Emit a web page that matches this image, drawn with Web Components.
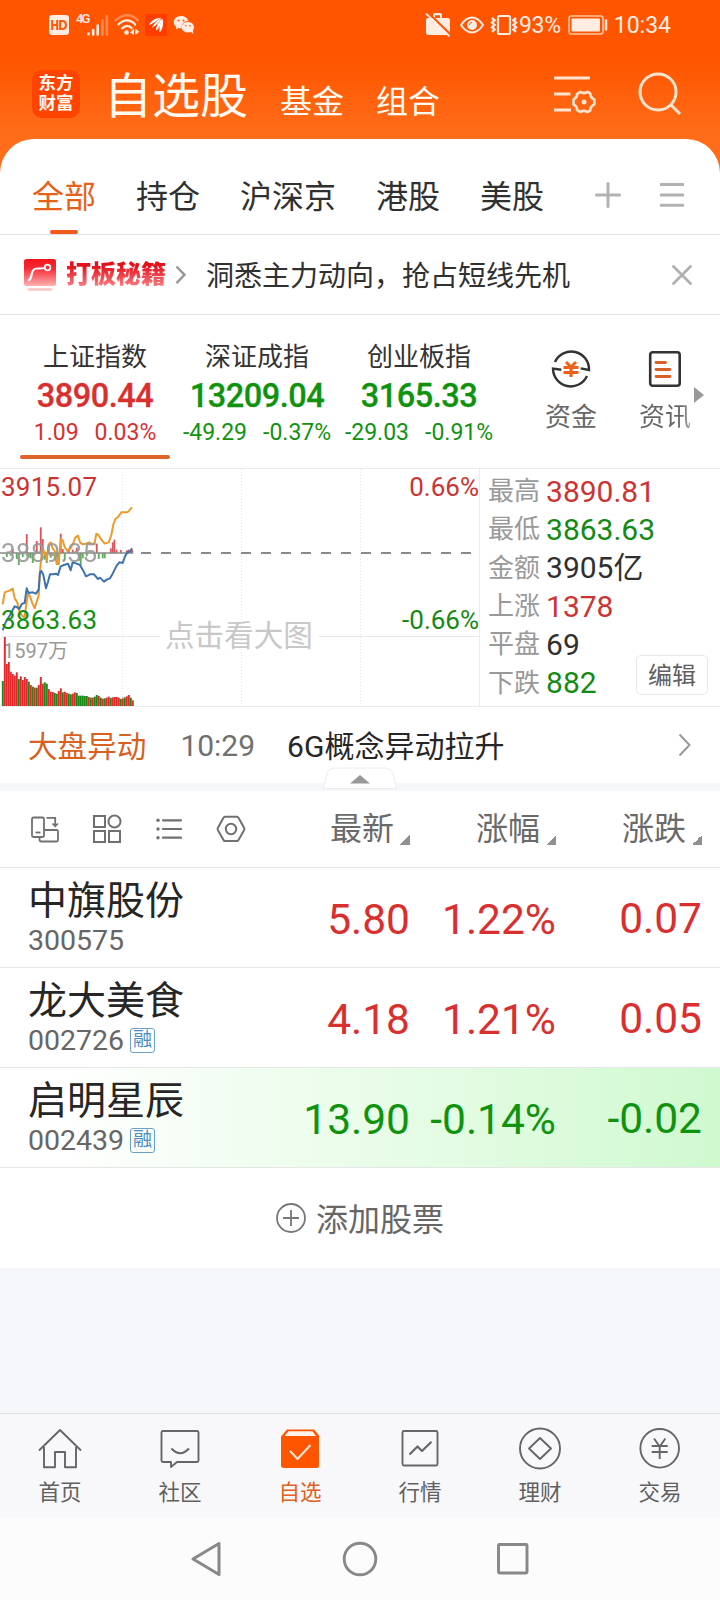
<!DOCTYPE html>
<html lang="zh-CN">
<head>
<meta charset="utf-8">
<title>自选股</title>
<style>
    body {
        margin: 0;
        width: 720px;
        background: #f6f7fa;
        color: #303030;
        font-family: Roboto, "Noto Sans CJK SC", sans-serif;
    }
</style>
</head>
<body>
<watch-app></watch-app>

<script>
// core/icons
const ICONS = {
    hd: [20, 20, `<rect width="20" height="20" rx="3" fill="#ffece3"/><g stroke="#ff5a0a" stroke-width="2.1" fill="none"><path d="M3.2 5v10M8.2 5v10M3.2 10h5M11.2 6v8h2c5 0 5-8 0-8z"/></g>`],
    signal: [22, 22, `<g stroke="#ffece3" stroke-width="2.6" stroke-linecap="round"><path d="M1.5 19.6v.6M6.2 16v4.4M10.7 11.5v9"/><path d="M15.4 6.5v14M19.8 2v18.500" opacity=".35"/></g>`],
    wifi: [26, 22, `<g fill="none" stroke="#ffece3" stroke-width="2.3" stroke-linecap="round"><path d="M1.500 6.500C8-.5 18-.5 24 6.500" opacity=".35"/><path d="M4.500 10.500c5-5.500 12-5.500 16.500 0M8 14.500c3.500-3.500 7-3.500 9.500-.5"/></g><circle cx="12.500" cy="18.500" r="2.300" fill="#ffece3"/><path d="M20 14.500v6.500l-4-2.500zM21.300 14.500v6.500l4-3.200z" fill="#ffece3"/>`],
    east: [22, 22, `<rect width="22" height="22" fill="#ff3d00"/><g fill="#fff"><path d="M4 11C6.500 6 11 4 16 3.800 12.500 6 9 9.500 4 11z"/><path d="M7 13.500C9 9.500 13 5.500 16.500 4 14 7.500 11.500 12 7 13.500z"/><path d="M11 16.500C11 12 14 7 17.300 4.500 16 9 15 14 11 16.500z"/><path d="M14.500 18.500C13.800 14 15.500 8 17.800 5 18.500 9.500 18 15.500 14.500 18.500z"/></g>`],
    wechat: [22, 20, `<path d="M8 1C3.800 1 .8 3.800.8 7.200c0 2 1 3.700 2.600 4.800l-.6 2.500 2.800-1.500c.8.2 1.600.3 2.400.3h.6C8 8.500 11.500 5.800 15.300 5.900 14.500 3 11.600 1 8 1z" fill="#ffece3"/><ellipse cx="14.800" cy="12.200" rx="6.300" ry="5.400" fill="#ffece3"/><path d="M17 16l3.300 3-.3-4z" fill="#ffece3"/><g fill="#ff5a0a"><circle cx="5.500" cy="5.500" r="1"/><circle cx="10.500" cy="5.500" r="1"/><circle cx="12.700" cy="10.800" r=".8"/><circle cx="17" cy="10.800" r=".8"/></g>`],
    briefcase: [26, 24, `<path d="M1 7q0-2 2-2h5V2q0-2 2-2h5q2 0 2 2v3h6q2 0 2 2v13q0 2-2 2H3q-2 0-2-2zM10 5h5V2.200h-5z" fill="#ffece3" fill-rule="evenodd"/><path d="M2.500-1L26 22" stroke="#ff5500" stroke-width="2"/><path d="M1 .5L24.500 23.500" stroke="#ffece3" stroke-width="1.800"/>`],
    eye: [24, 18, `<path d="M1 9q5-7.500 11-7.500T23 9q-5 7.500-11 7.500T1 9z" fill="none" stroke="#ffece3" stroke-width="2"/><circle cx="12" cy="9" r="5" fill="#ffece3"/><path d="M9.500 9c0-1.500 1-2.500 2.500-2.500" stroke="#ff5500" fill="none"/>`],
    vibrate: [28, 22, `<rect x="8" y="2" width="12" height="18" rx="1.500" fill="none" stroke="#ffece3" stroke-width="2.200"/><path d="M2 4l2.500 2.300-2.500 2.300 2.500 2.300-2.500 2.300 2.500 2.300-2.500 2.300M26 4l-2.500 2.300 2.500 2.300-2.500 2.300 2.500 2.300-2.500 2.300 2.500 2.300" stroke="#ffece3" stroke-width="2.400" fill="none"/>`],
    battery: [40, 20, `<rect x="1" y="1" width="34" height="18" rx="2.500" fill="none" stroke="#ffc4a3" stroke-width="1.600"/><rect x="3.500" y="3.500" width="28.500" height="13" rx="1" fill="#ffece3"/><path d="M38 4.500v11" stroke="#ffece3" stroke-width="2.500"/>`],
    filter: [42, 40, `<g stroke="#ffe4cf" stroke-width="3" fill="none"><path d="M0 4h36M0 20h16.500M0 36h17"/><path d="M26.500 17.800q3.500 2.400 7 0l2.600 1.600q.2 4.200 4.200 6.200v4.800q-4 2-4.200 6.200L33.500 38q-3.500-2.200-7 0l-3.300-1.900q-.2-3.800-3.700-5.700v-4.800q3.500-2 3.700-5.700z" stroke-width="2.700" stroke-linejoin="round"/></g><circle cx="30" cy="28" r="2.500" fill="#ffe4cf"/>`],
    search: [44, 44, `<g stroke="#ffe4cf" stroke-width="3" fill="none"><circle cx="20" cy="20" r="18"/><path d="M32 32l10 10"/></g>`],
    plus: [26, 26, `<path d="M13 1.500v23M1.500 13h23" stroke="#b2b2b2" stroke-width="3" stroke-linecap="round"/>`],
    menu: [24, 26, `<path d="M1 2.500h22M1 13h22M1 23.300h22" stroke="#b2b2b2" stroke-width="3" stroke-linecap="round"/>`],
    promo: [34, 34, `<defs><linearGradient id="pg" x2="0" y2="1"><stop stop-color="#f5131c"/><stop offset=".35" stop-color="#f52c35"/><stop offset="1" stop-color="#ffb1b1"/></linearGradient></defs><rect x="1" y="1" width="32" height="27" rx="2.500" fill="url(#pg)"/><path d="M6 22C10 20 7 10.500 14 10.500c5 0 6.500 0 7.500-.6" stroke="#fff" stroke-width="2.200" fill="none" stroke-linecap="round"/><circle cx="24.500" cy="9.500" r="2.800" stroke="#fff" stroke-width="1.800" fill="none"/><path d="M6 31.500h22" stroke="#ffc4c4" stroke-width="2.600" stroke-linecap="round"/>`],
    chevron: [12, 20, `<path d="M1.500 1.500l8 8.300-8 8.300" stroke="#999" stroke-width="2.500" fill="none"/>`],
    more: [14, 24, `<path d="M1.500 1.500l10 10.500-10 10.500" stroke="#999" stroke-width="2" fill="none"/>`],
    close: [20, 20, `<path d="M1.500 1.500l17 17M18.500 1.500l-17 17" stroke="#b0b0b0" stroke-width="2.800" stroke-linecap="round"/>`],
    fund: [40, 40, `<g fill="none" stroke="#333" stroke-width="2.400"><path d="M4 13A17.800 17.800 0 0 1 38 21l-8.300-1.600"/><path d="M36 27A17.800 17.800 0 0 1 2 19.600l8.300 1.200"/></g><path d="M15 13l5 5 5-5M12.500 18.500h15M12.500 23.500h15M20 18v10" stroke="#f06018" stroke-width="3" fill="none"/>`],
    news: [34, 38, `<rect x="2.200" y="2.200" width="29.500" height="33.500" rx="2.500" fill="none" stroke="#333" stroke-width="2.600"/><path d="M8 12.500h9.500M8 19.500h14M8 26.500h14" stroke="#dc6128" stroke-width="2.800" stroke-linecap="round"/>`],
    rotate: [30, 28, `<g fill="none" stroke="#707070" stroke-width="1.800"><rect x="2" y="2.500" width="12" height="19.500" rx="1.500"/><path d="M5.500 17.500h5"/><path d="M16.500 2.800h8.700v8.500M22.500 8.500l2.700 2.800 2.700-2.800"/><path d="M14.500 15h12q1.500 0 1.500 1.500v8.500q0 1.500-1.500 1.500h-15q-2 0-2-2v-2"/></g>`],
    grid: [30, 30, `<g fill="none" stroke="#707070" stroke-width="2"><rect x="2" y="2" width="11" height="11"/><circle cx="22.500" cy="7.500" r="6"/><rect x="2" y="17" width="11" height="11"/><rect x="17" y="17" width="11" height="11"/></g>`],
    list: [26, 22, `<path d="M7 2.300h18M7 11h18M7 19.700h18" stroke="#707070" stroke-width="2.200" stroke-linecap="round"/><g fill="#707070"><circle cx="2" cy="2.300" r="1.700"/><circle cx="2" cy="11" r="1.700"/><circle cx="2" cy="19.700" r="1.700"/></g>`],
    hex: [30, 28, `<g fill="none" stroke="#707070" stroke-width="2" stroke-linejoin="round"><path d="M9 1.700h12q1 0 1.500 1L28.200 13q.4 1 0 2l-5.700 10q-.5 1-1.500 1H9q-1 0-1.500-1L1.800 15q-.4-1 0-2L7.500 2.700q.5-1 1.500-1z"/><circle cx="15" cy="14" r="5.200"/></g>`],
    add: [30, 30, `<g fill="none" stroke="#777" stroke-width="1.800"><circle cx="15" cy="15" r="14"/><path d="M15 7v16M7 15h16"/></g>`],
    home: [44, 44, `<g fill="none" stroke="#666" stroke-width="1.900" stroke-linejoin="round"><path d="M1 23.500L22 3l21 20.500"/><path d="M6 20v20.300h11V25h10v15.300h11V20"/></g>`],
    chat: [44, 44, `<g fill="none" stroke="#666" stroke-width="1.900" stroke-linejoin="round"><path d="M5 4h34q1.500 0 1.500 1.500v28q0 1.500-1.500 1.500H19l-6 5v-5H5q-1.500 0-1.500-1.500v-28Q3.500 4 5 4z"/><path d="M13.500 21.500q8.500 9.500 17.500 0" stroke-width="2.200"/></g>`],
    pick: [44, 44, `<path d="M9 2.500h27l5 6v30q0 2.500-2.500 2.500h-32Q3 41 3 38.500v-29z" fill="#ff5500"/><path d="M10.500 4.200h24l3.600 4.800H6.500z" fill="#fff3ea"/><path d="M12 24l7.500 8L32.500 18" stroke="#ffe9dc" stroke-width="2" fill="none"/>`],
    trend: [44, 44, `<g fill="none" stroke="#666" stroke-width="1.900" stroke-linejoin="round"><rect x="4.500" y="4" width="35" height="34.500" rx="1.500"/><path d="M11.500 27.500l8-8 4.500 4.500 9.500-9.200" stroke-width="2.200"/></g>`],
    wealth: [44, 44, `<g fill="none" stroke="#666" stroke-width="1.900" stroke-linejoin="round"><circle cx="22" cy="21.500" r="20"/><path d="M22 11L33 21.500 22 32 11 21.500z"/></g>`],
    trade: [44, 44, `<g fill="none" stroke="#666" stroke-width="1.900"><circle cx="21.700" cy="21.300" r="19.300"/><path d="M16 11.500l5.700 8 5.700-8M13.700 19h16M13.700 25h16M21.700 19v13"/></g>`],
    back: [36, 40, `<path d="M31 4.500v31L5 20z" fill="none" stroke="#888" stroke-width="3" stroke-linejoin="round"/>`],
    circle: [36, 36, `<circle cx="18" cy="18" r="15.800" fill="none" stroke="#888" stroke-width="2.900"/>`],
    square: [34, 34, `<rect x="2.500" y="2.500" width="28.500" height="28.500" rx="1" fill="none" stroke="#888" stroke-width="2.900"/>`]
};

// Small base class, every element only brings its own template
class BaseElement extends HTMLElement {
    constructor() {
        super();
        this.attachShadow({ mode: "open" });
    }

    connectedCallback() {
        this.shadowRoot.innerHTML = this.template();
    }

    attr(name) {
        return this.getAttribute(name) || "";
    }
}

class UiIcon extends BaseElement {
    template() {
        const [w, h, body] = ICONS[this.attr("name")];
        return `
          <style>
            :host { display: block; flex: none; width: ${w}px; height: ${h}px; }
            svg { display: block; }
          </style>
          <svg width="${w}" height="${h}" viewBox="0 0 ${w} ${h}">${body}</svg>
        `;
    }
}

class StatusBar extends BaseElement {
    template() {
        return `
          <style>
            :host { display: flex; align-items: center; height: 50px; padding: 0 49px; color: #ffece3; font-size: 23px; box-sizing: border-box; }
            .net { font-size: 13px; font-weight: 500; align-self: flex-start; margin: 11px 0 0 7px; width: 11px; white-space: nowrap; letter-spacing: -1.9px; }
            .gap { flex: 1; }
            .pct { margin: 0 7px 0 1px; letter-spacing: -.3px; }
            .time { margin-left: 6px; }
          </style>
          <ui-icon name="hd"></ui-icon>
          <span class="net">4G</span>
          <ui-icon name="signal"></ui-icon>
          <ui-icon name="wifi" style="margin-left:5px"></ui-icon>
          <ui-icon name="east" style="margin-left:5px"></ui-icon>
          <ui-icon name="wechat" style="margin-left:6px"></ui-icon>
          <span class="gap"></span>
          <ui-icon name="briefcase"></ui-icon>
          <ui-icon name="eye" style="margin:0 8px 0 9px"></ui-icon>
          <ui-icon name="vibrate" style="margin-left:-2px"></ui-icon>
          <span class="pct">93%</span>
          <ui-icon name="battery"></ui-icon>
          <span class="time">10:34</span>
        `;
    }
}

class AppHeader extends BaseElement {
    template() {
        return `
          <style>
            :host { display: block; height: 180px; background: linear-gradient(#ff5500 0, #ff5500 60px, #ff6d1a 135px, #ff6d1a 100%); }
            .bar { display: flex; align-items: center; height: 88px; padding: 0 38px 0 32px; color: #fffaf2; }
            .logo { width: 48px; height: 48px; border-radius: 10px; background: #ff4300; font-size: 17.500px; line-height: 19.500px; font-weight: 700; text-align: center; padding-top: 4px; box-sizing: border-box; }
            .titles { display: flex; align-items: baseline; margin-left: 24px; flex: 1; font-size: 32px; line-height: 60px; gap: 32px; padding-top: 10px; }
            .main { font-size: 48px; }
            ui-icon + ui-icon { margin-left: 42px; }
          </style>
          <status-bar></status-bar>
          <div class="bar">
            <div class="logo">东方<br>财富</div>
            <div class="titles"><span class="main">自选股</span><span>基金</span><span>组合</span></div>
            <ui-icon name="filter"></ui-icon>
            <ui-icon name="search"></ui-icon>
          </div>
        `;
    }
}

class GroupTab extends BaseElement {
    template() {
        return `
          <style>
            :host { display: flex; flex-direction: column; align-items: center; height: 95px; box-sizing: border-box; padding-top: 34px; font-size: 32px; line-height: 48px; }
            :host([active]) { color: #e85f1b; }
            i { display: none; width: 28px; height: 4px; border-radius: 2px; background: #f05a1c; margin-top: 9px; }
            :host([active]) i { display: block; }
          </style>
          <slot></slot><i></i>
        `;
    }
}

class GroupTabs extends BaseElement {
    template() {
        return `
          <style>
            :host { display: flex; gap: 40px; height: 96px; padding: 0 36px 0 32px; border-bottom: 1px solid #e2e2e2; box-sizing: border-box; border-radius: 34px 34px 0 0; background: #fff; margin-top: -41px; position: relative; }
            .tools { display: flex; align-items: center; gap: 39px; margin-left: auto; height: 111px; }
          </style>
          <group-tab active>全部</group-tab>
          <group-tab>持仓</group-tab>
          <group-tab>沪深京</group-tab>
          <group-tab>港股</group-tab>
          <group-tab>美股</group-tab>
          <div class="tools"><ui-icon name="plus"></ui-icon><ui-icon name="menu"></ui-icon></div>
        `;
    }
}

class PromoBanner extends BaseElement {
    template() {
        return `
          <style>
            :host { display: flex; align-items: center; height: 80px; box-sizing: border-box; padding: 0 28px 0 23px; border-bottom: 1px solid #e2e2e2; background: #fff; font-size: 28px; }
            .brand { margin: 0 9px 0 9px; font-size: 25px; font-weight: 900; line-height: 30px; background: linear-gradient(#e6101a 20%, #ff8f93 100%); -webkit-background-clip: text; background-clip: text; color: transparent; }
            .text { margin: -1px 0 0 19px; flex: 1; }
          </style>
          <ui-icon name="promo"></ui-icon>
          <span class="brand">打板秘籍</span>
          <ui-icon name="chevron"></ui-icon>
          <span class="text"><slot></slot></span>
          <ui-icon name="close"></ui-icon>
        `;
    }
}

class IndexCard extends BaseElement {
    template() {
        return `
          <style>
            :host { display: flex; flex-direction: column; align-items: center; width: 162px; color: #0f930f; white-space: nowrap; }
            :host([up]) { color: #d92f2f; }
            .name { font-size: 26px; line-height: 38px; margin-top: 23px; color: #333; }
            .value { font-size: 32.500px; letter-spacing: -.5px; line-height: 38px; margin-top: 1px; font-weight: 500; -webkit-text-stroke: .3px currentColor; }
            .sub { display: flex; gap: 16px; font-size: 23px; line-height: 36px; }
            i { width: 150px; height: 4px; border-radius: 2px; margin-top: 4px; }
            :host([active]) i { background: #e0642a; }
          </style>
          <span class="name">${this.attr("name")}</span>
          <span class="value">${this.attr("value")}</span>
          <span class="sub"><span>${this.attr("diff")}</span><span>${this.attr("rate")}</span></span>
          <i></i>
        `;
    }
}

class IndexStrip extends BaseElement {
    template() {
        return `
          <style>
            :host { display: flex; height: 154px; box-sizing: border-box; padding-left: 14px; border-bottom: 1px solid #ececec; background: #fff; }
            .link { display: flex; flex-direction: column; align-items: center; width: 52px; margin-left: 45px; padding-top: 34px; color: #666; font-size: 26px; white-space: nowrap; }
            .link ui-icon { margin-bottom: 9px; }
            .link + .link { margin-left: 42px; }
            .link span { line-height: 38px; }
            .fade { background: linear-gradient(90deg, #666 80%, #aaa); -webkit-background-clip: text; background-clip: text; color: transparent; }
            .tip { width: 0; height: 0; margin: 72px 0 0 3px; border: 8px solid transparent; border-left: 10px solid #999; border-right: 0; }
          </style>
          <index-card up active name="上证指数" value="3890.44" diff="1.09" rate="0.03%"></index-card>
          <index-card name="深证成指" value="13209.04" diff="-49.29" rate="-0.37%"></index-card>
          <index-card name="创业板指" value="3165.33" diff="-29.03" rate="-0.91%"></index-card>
          <div class="link"><ui-icon name="fund"></ui-icon><span>资金</span></div>
          <div class="link"><ui-icon name="news" style="margin:1px 0 10px"></ui-icon><span class="fade">资讯</span></div>
          <div class="tip"></div>
        `;
    }
}

// Minute chart: average line, price line, force bars around the mid line and volume below.
// Series are kept in a grid three times finer than the screen.
class MinuteChart extends BaseElement {
    template() {
        const volume = [648, 516, 597, 591, 620, 627, 632, 622, 642, 634, 645, 636, 642, 650, 660, 665, 668, 668, 660, 636, 656,
            652, 656, 672, 680, 681, 684, 686, 678, 670, 682, 680, 684, 686, 688, 686, 682, 684, 692, 692, 692, 693, 693,
            696, 698, 698, 695, 690, 693, 698, 701, 700, 698, 695, 699, 697, 696, 696, 698, 702, 700, 697, 694, 690, 698, 706];
        const green = new Set([0, 8, 13, 15, 17, 21, 22, 26, 27, 30, 33, 34, 37, 38, 39, 40, 41, 42, 44, 46, 47, 49, 51, 54, 59, 61, 64]);
        const bars = volume.map((y, i) =>
            `<rect x="${5.5 + i * 6}" y="${y}" width="5.800" height="${723 - y}" fill="${green.has(i) ? "#178a17" : "#e5282b"}"/>`).join("");
        const force = [[20, 12], [32, 8], [38, -12], [50, 18], [56, 36], [68, 12], [80, -57], [86, 14], [92, 16], [98, 30], [110, -36], [122, -77],
            [128, -42], [134, 20], [140, 30], [146, -24], [152, 14], [164, 20], [170, 36], [176, 34], [182, -58], [188, -12], [194, 22], [206, -14],
            [218, -10], [230, -16], [236, 24], [242, 36], [248, 16], [260, 10], [290, -28], [296, 18], [308, 16], [314, 16], [332, -14], [338, -32],
            [343, -40], [349, -10], [362, -9], [380, -8], [386, -10], [396, -10]];
        const ticks = force.map(([x, d]) =>
            `<rect x="${x - 2.500}" y="${d < 0 ? 264 + d : 264}" width="5.500" height="${Math.abs(d)}" fill="${d < 0 ? "#d9555a" : "#5fae5c"}"/>`).join("");
        return `
          <style>
            :host { display: block; width: 480px; height: 238px; border-right: 1px solid #ececec; box-sizing: border-box; }
            svg { display: block; font-family: Roboto, "Noto Sans CJK SC", sans-serif; font-size: 26px; }
          </style>
          <svg width="479" height="238" viewBox="0 469 479 238">
            <path d="M122.500 469v237M241.500 469v237M360.500 469v237" stroke="#e4e4e4" stroke-dasharray="1 2"/>
            <path d="M1 636.500h159M319 636.500h161" stroke="#e8e8e8"/>
            <text x="1" y="496" fill="#cc3333" textLength="96">3915.07</text>
            <text x="479" y="496" fill="#cc3333" text-anchor="end">0.66%</text>
            <text x="479" y="629" fill="#138a13" text-anchor="end">-0.66%</text>
            <text x="165" y="646" fill="#c8c8c8" font-size="29.600">点击看大图</text>
            <text x="3" y="658" fill="#999" font-size="20">1597万</text>
            <g transform="translate(0 465) scale(.33333)">
              ${bars}${ticks}
              <path d="M0 264h400" stroke="#888" stroke-width="5"/>
              <g fill="none" stroke-width="6" stroke-linejoin="round">
                <path stroke="#ee9a28" d="M8 418L14 382 22 379 30 376 38 371 44 400 52 412 58 440 66 452 74 458 78 425 84 386 90 394 96 412 104 430 110 410 116 392 119 330 124 275 128 252 134 262 140 286 146 238 152 232 158 250 164 258 170 296 176 298 182 222 188 226 194 246 202 258 210 252 218 238 226 218 234 212 240 232 248 238 258 236 268 232 276 238 284 234 289 206 296 211 304 224 314 236 326 232 334 210 340 178 346 162 354 156 364 142 382 142 388 136 396 127"/>
                <path stroke="#3d73ad" d="M8 496L16 474 30 450 44 424 50 426 58 432 66 416 74 414 80 370 86 384 98 382 108 386 116 374 120 322 124 318 130 330 138 370 144 350 150 328 160 328 168 326 174 330 182 304 192 300 204 296 212 316 218 292 230 296 240 300 248 314 258 334 270 328 282 328 294 342 300 338 312 350 320 344 330 340 338 326 350 302 358 292 368 294 376 272 384 260 390 260 396 250"/>
              </g>
            </g>
            <text x="1" y="562" fill="#999" textLength="96" opacity=".9">3889.35</text>
            <text x="1" y="629" fill="#109010" textLength="96">3863.63</text>
            <path d="M141 553h335" stroke="#888" stroke-width="2" stroke-dasharray="10 10"/>
          </svg>
        `;
    }
}

class StatLine extends BaseElement {
    template() {
        return `
          <style>
            :host { display: flex; align-items: center; gap: 6px; height: 38.300px; font-size: 30px; color: #303030; white-space: nowrap; }
            :host([tone="up"]) { color: #cc3333; }
            :host([tone="down"]) { color: #138a13; }
            .label { font-size: 26px; line-height: 36px; margin-top: -1px; color: #999; }
            .value { line-height: 38px; }
          </style>
          <span class="label">${this.attr("label")}</span><span class="value"><slot></slot></span>
        `;
    }
}

class MarketPanel extends BaseElement {
    template() {
        return `
          <style>
            :host { display: flex; height: 238px; box-sizing: border-box; border-bottom: 1px solid #ececec; background: #fff; }
            .stats { padding: 3.500px 0 0 8px; width: 148px; }
            .edit { align-self: flex-end; width: 72px; height: 40px; margin-bottom: 11px; box-sizing: border-box; border: 1px solid #e8e8e8; border-radius: 5px; font-size: 24px; line-height: 41px; text-align: center; color: #606060; background: #fff; z-index: 1; }
          </style>
          <minute-chart></minute-chart>
          <div class="stats">
            <stat-line tone="up" label="最高">3890.81</stat-line>
            <stat-line tone="down" label="最低">3863.63</stat-line>
            <stat-line label="金额">3905亿</stat-line>
            <stat-line tone="up" label="上涨">1378</stat-line>
            <stat-line label="平盘">69</stat-line>
            <stat-line tone="down" label="下跌">882</stat-line>
          </div>
          <div class="edit">编辑</div>
        `;
    }
}

class AlertRow extends BaseElement {
    template() {
        return `
          <style>
            :host { display: flex; align-items: center; height: 84px; box-sizing: border-box; padding: 0 28px 0 28px; border-bottom: 8px solid #f6f7fa; background: #fff; font-size: 30px; position: relative; }
            span { margin-top: -2px; }
            .tag { color: #d9601f; font-size: 29.600px; }
            .time { color: #707070; margin: 0 32px 0 34px; }
            .text { color: #262626; flex: 1; }
            .handle { position: absolute; left: 322px; top: 60px; }
          </style>
          <span class="tag">大盘异动</span>
          <span class="time">10:29</span>
          <span class="text"><slot></slot></span>
          <ui-icon name="more"></ui-icon>
          <svg class="handle" width="76" height="22"><path d="M1 21.500C5 11 3 1 14 1h48c11 0 9 10 13 20.500z" fill="#fff" stroke="#ececec"/><path d="M28 16.500l10-8.500 10 8.500z" fill="#999"/></svg>
        `;
    }
}

class SortHead extends BaseElement {
    template() {
        return `
          <style>
            :host { display: flex; align-items: center; justify-content: flex-end; font-size: 32px; line-height: 46px; color: #6a6a6a; }
            i { width: 10px; height: 10px; margin: 22px 0 0 6px; background: linear-gradient(135deg, transparent 50%, #909090 50%); }
          </style>
          <slot></slot><i></i>
        `;
    }
}

class ListHead extends BaseElement {
    template() {
        return `
          <style>
            :host { display: flex; align-items: center; height: 77px; box-sizing: border-box; padding: 0 18px 0 30px; border-bottom: 1px solid #e6e6e6; background: #fff; }
            .tools { display: flex; align-items: center; gap: 33px; flex: 1; }
            .tools [name="grid"] { margin: 0 1px 0 -1px; }
            .tools [name="hex"] { margin-left: 1px; }
            sort-head { width: 146px; }
          </style>
          <div class="tools">
            <ui-icon name="rotate"></ui-icon><ui-icon name="grid"></ui-icon><ui-icon name="list"></ui-icon><ui-icon name="hex"></ui-icon>
          </div>
          <sort-head>最新</sort-head><sort-head>涨幅</sort-head><sort-head>涨跌</sort-head>
        `;
    }
}

class StockRow extends BaseElement {
    template() {
        const badge = this.hasAttribute("margin") ? `<b>融</b>` : "";
        return `
          <style>
            :host { display: flex; align-items: center; height: 100px; box-sizing: border-box; padding: 0 18px 0 28px; border-bottom: 1px solid #e6e6e6; background: #fff; color: #d92f2f; font-size: 42.500px; }
            :host([down]) { color: #0f930f; background: linear-gradient(90deg, #fff 8%, #d0f9d0); }
            .title { flex: 1; color: #262626; }
            .name { font-size: 39px; line-height: 46px; }
            .code { display: flex; align-items: center; font-size: 28.500px; line-height: 32px; padding-top: 1px; color: #666; }
            b { width: 25px; height: 25px; box-sizing: border-box; border: 1.500px solid #6a9fc9; border-radius: 3px; margin: -1px 0 0 6px; font-size: 19px; line-height: 22px; font-weight: 400; text-align: center; color: #4a8cc0; }
            .num { text-align: right; width: 146px; padding-top: 4px; white-space: nowrap; }
            .num:last-child { padding-top: 1px; }
          </style>
          <div class="title">
            <div class="name">${this.attr("name")}</div>
            <div class="code">${this.attr("code")}${badge}</div>
          </div>
          <span class="num">${this.attr("price")}</span>
          <span class="num">${this.attr("rate")}</span>
          <span class="num">${this.attr("diff")}</span>
        `;
    }
}

class AddStock extends BaseElement {
    template() {
        return `
          <style>
            :host { display: flex; align-items: center; justify-content: center; gap: 10px; height: 100px; background: #fff; font-size: 32px; color: #666; }
            span { margin-top: -2px; }
          </style>
          <ui-icon name="add"></ui-icon><span><slot></slot></span>
        `;
    }
}

class NavItem extends BaseElement {
    template() {
        return `
          <style>
            :host { display: flex; flex-direction: column; align-items: center; flex: 1; padding-top: 13px; font-size: 21.500px; line-height: 32px; color: #606060; }
            :host([active]) { color: #e06020; }
            ui-icon { margin-bottom: 6px; }
          </style>
          <ui-icon name="${this.attr("icon")}"></ui-icon><slot></slot>
        `;
    }
}

class BottomNav extends BaseElement {
    template() {
        return `
          <style>
            :host { display: flex; height: 105px; box-sizing: border-box; border-top: 1px solid #e2e2e4; background: #f8f8fb; }
          </style>
          <nav-item icon="home">首页</nav-item>
          <nav-item icon="chat">社区</nav-item>
          <nav-item icon="pick" active>自选</nav-item>
          <nav-item icon="trend">行情</nav-item>
          <nav-item icon="wealth">理财</nav-item>
          <nav-item icon="trade">交易</nav-item>
        `;
    }
}

class SystemNav extends BaseElement {
    template() {
        return `
          <style>
            :host { display: flex; align-items: center; justify-content: center; gap: 118px; height: 82px; padding-right: 3px; background: #fcfcfc; }
          </style>
          <ui-icon name="back"></ui-icon><ui-icon name="circle"></ui-icon><ui-icon name="square"></ui-icon>
        `;
    }
}

class WatchApp extends BaseElement {
    template() {
        return `
          <style>
            :host { display: flex; flex-direction: column; height: 1600px; overflow: hidden; }
            :host > * { flex: none; }
            .space { flex: 1; }
          </style>
          <app-header></app-header>
          <group-tabs></group-tabs>
          <promo-banner>洞悉主力动向，抢占短线先机</promo-banner>
          <index-strip></index-strip>
          <market-panel></market-panel>
          <alert-row>6G概念异动拉升</alert-row>
          <list-head></list-head>
          <stock-row name="中旗股份" code="300575" price="5.80" rate="1.22%" diff="0.07"></stock-row>
          <stock-row name="龙大美食" code="002726" margin price="4.18" rate="1.21%" diff="0.05"></stock-row>
          <stock-row down name="启明星辰" code="002439" margin price="13.90" rate="-0.14%" diff="-0.02"></stock-row>
          <add-stock>添加股票</add-stock>
          <div class="space"></div>
          <bottom-nav></bottom-nav>
          <system-nav></system-nav>
        `;
    }
}

customElements.define("ui-icon", UiIcon);
customElements.define("status-bar", StatusBar);
customElements.define("app-header", AppHeader);
customElements.define("group-tab", GroupTab);
customElements.define("group-tabs", GroupTabs);
customElements.define("promo-banner", PromoBanner);
customElements.define("index-card", IndexCard);
customElements.define("index-strip", IndexStrip);
customElements.define("minute-chart", MinuteChart);
customElements.define("stat-line", StatLine);
customElements.define("market-panel", MarketPanel);
customElements.define("alert-row", AlertRow);
customElements.define("sort-head", SortHead);
customElements.define("list-head", ListHead);
customElements.define("stock-row", StockRow);
customElements.define("add-stock", AddStock);
customElements.define("nav-item", NavItem);
customElements.define("bottom-nav", BottomNav);
customElements.define("system-nav", SystemNav);
customElements.define("watch-app", WatchApp);
</script>
</body>
</html>
